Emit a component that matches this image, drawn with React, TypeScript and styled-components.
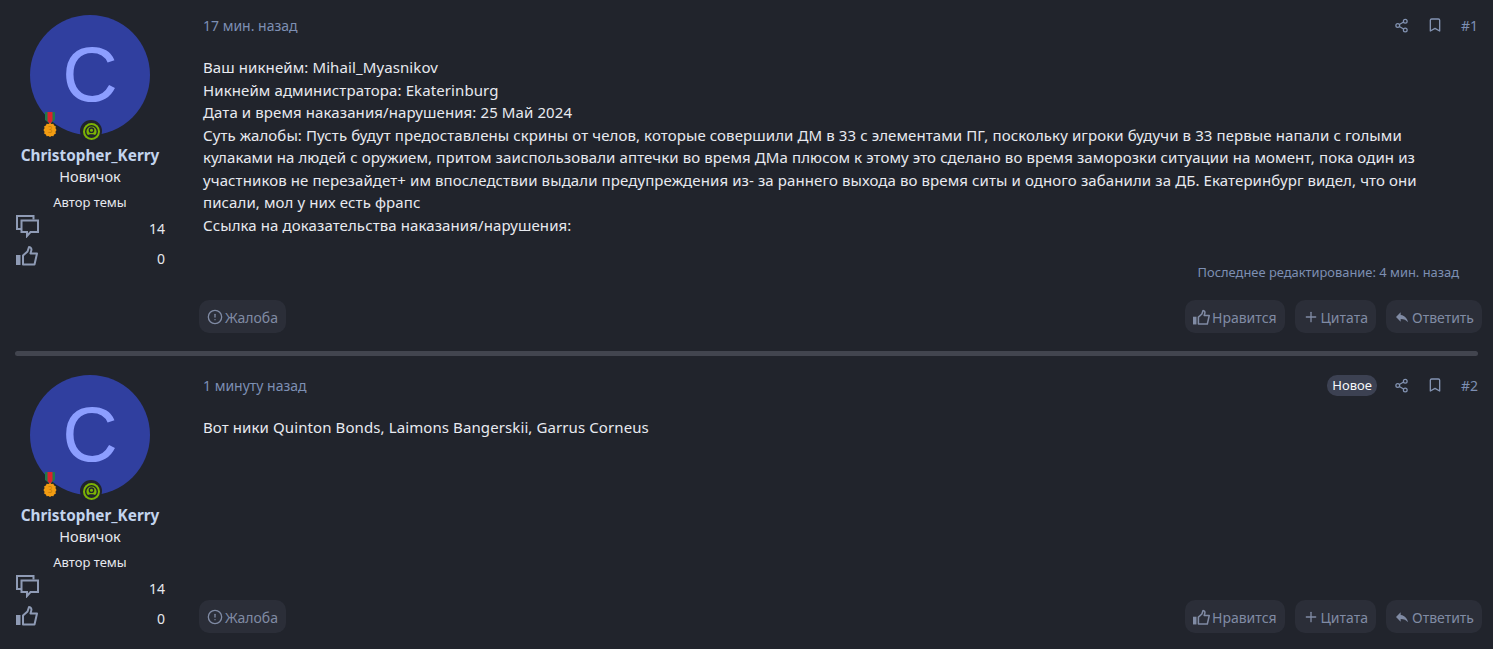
import React from "react";
import styled, {createGlobalStyle} from "styled-components";
import {Share2, Bookmark, Plus, AlertCircle} from "lucide-react";
import {MdReply} from "react-icons/md";

const GlobalStyle = createGlobalStyle`
  html, body {
    margin: 0;
    padding: 0;
    background: #21242c;
    overflow: hidden;
  }
  body {
    font-family: "Noto Sans", "Open Sans", sans-serif;
  }
`

const ThumbIcon = ({size = 22, stroke = 2}: {size?: number; stroke?: number}) => (
    <svg width={size} height={size} viewBox="0 0 22 22" fill="none" stroke="currentColor" strokeWidth={stroke} strokeLinejoin="round">
        <path d="M0 10h4.500v10H0z" fill="currentColor" stroke="none"/>
        <path d="M7 10.500 11.500 6.500 13 2c2 .2 2.800 1.800 2.300 3.500L14.500 8.500H21L18.500 19.500H7z"/>
    </svg>
)

const CommentsIcon = () => (
    <svg width="23" height="23" viewBox="0 0 23 23" fill="none" stroke="currentColor" strokeWidth="2">
        <path d="M5 14H1V1H17.500V4.500"/>
        <path d="M5.500 5.500H22V17H14.500L11 21V17H5.500Z"/>
    </svg>
)

const MedalIcon = () => (
    <svg width="16" height="26" viewBox="0 0 16 26">
        <path d="M3 0h10v8l-5 4-5-4z" fill="#1f7a4c"/>
        <path d="M5.500 0h5v9l-2.500 3-2.500-3z" fill="#d9232e"/>
        <path d="M8 11l1.500 1.100 1.900-.3.700 1.700 1.700.8-.3 1.900L14.500 18l-1 1.800.3 1.900-1.700.8-.7 1.700-1.900-.3L8 25l-1.500-1.100-1.900.3-.7-1.700-1.700-.8.3-1.900-1-1.800 1-1.800-.3-1.900 1.700-.8.700-1.700 1.900.3z" fill="#f39c12"/>
        <text x="8" y="21" textAnchor="middle" fontSize="8" fontFamily="Noto Sans" fill="#c97c08">3</text>
    </svg>
)

const StatusIcon = () => (
    <svg width="17" height="17" viewBox="0 0 17 17">
        <circle cx="8.500" cy="8.500" r="8.500" fill="#7cb305"/>
        <circle cx="8.500" cy="8.500" r="5.800" fill="none" stroke="#21242c" strokeWidth="1.400"/>
        <circle cx="8.500" cy="7.200" r="2.200" fill="none" stroke="#21242c" strokeWidth="1.300"/>
        <path d="M4.500 12.500c1.200-1.600 6.800-1.600 8 0l-1.500 1.500H6z" fill="#21242c"/>
    </svg>
)

type PostData = {
    height: number;
    time: string;
    number: string;
    isNew?: boolean;
    edited?: string;
    lines: string[];
}

const posts: PostData[] = [
    {
        height: 351,
        time: "17 мин. назад",
        number: "#1",
        edited: "Последнее редактирование: 4 мин. назад",
        lines: [
            "Ваш никнейм: Mihail_Myasnikov",
            "Никнейм администратора: Ekaterinburg",
            "Дата и время наказания/нарушения: 25 Май 2024",
            "Суть жалобы: Пусть будут предоставлены скрины от челов, которые совершили ДМ в 33 с элементами ПГ, поскольку игроки будучи в 33 первые напали с голыми кулаками на людей с оружием, притом заиспользовали аптечки во время ДМа плюсом к этому это сделано во время заморозки ситуации на момент, пока один из участников не перезайдет+ им впоследствии выдали предупреждения из- за раннего выхода во время ситы и одного забанили за ДБ. Екатеринбург видел, что они писали, мол у них есть фрапс",
            "Ссылка на доказательства наказания/нарушения:",
        ],
    },
    {
        height: 291,
        time: "1 минуту назад",
        number: "#2",
        isNew: true,
        lines: ["Вот ники Quinton Bonds, Laimons Bangerskii, Garrus Corneus"],
    },
]

const Post = ({post}: {post: PostData}) => (
    <PostRow $height={post.height}>
        <Sidebar>
            <AvatarWrap>
                <Avatar>C</Avatar>
                <Medal><MedalIcon/></Medal>
                <Status><StatusIcon/></Status>
            </AvatarWrap>
            <UserName>Christopher_Kerry</UserName>
            <UserRank>Новичок</UserRank>
            <AuthorLabel>Автор темы</AuthorLabel>
            <StatRow>
                <StatIcon><CommentsIcon/></StatIcon>
                <StatValue>14</StatValue>
            </StatRow>
            <StatRow>
                <StatIcon><ThumbIcon/></StatIcon>
                <StatValue>0</StatValue>
            </StatRow>
        </Sidebar>
        <Main>
            <PostHeader>
                <Time>{post.time}</Time>
                <HeaderActions>
                    {post.isNew && <NewBadge>Новое</NewBadge>}
                    <HeaderIcon><Share2 size={15} strokeWidth={2}/></HeaderIcon>
                    <HeaderIcon><Bookmark size={16} strokeWidth={2}/></HeaderIcon>
                    <PostNumber>{post.number}</PostNumber>
                </HeaderActions>
            </PostHeader>
            <Body>
                {post.lines.map((line) => <div key={line}>{line}</div>)}
            </Body>
            {post.edited && <Edited>{post.edited}</Edited>}
            <Footer>
                <Button><AlertCircle size={16} strokeWidth={2}/>Жалоба</Button>
                <FooterRight>
                    <Button><ThumbIcon size={17}/>Нравится</Button>
                    <Button><Plus size={16} strokeWidth={2}/>Цитата</Button>
                    <Button><MdReply size={16}/>Ответить</Button>
                </FooterRight>
            </Footer>
        </Main>
    </PostRow>
)

export default function App() {
    return (
        <Page>
            <GlobalStyle/>
            <Post post={posts[0]}/>
            <Divider/>
            <Post post={posts[1]}/>
        </Page>
    )
}

const Page = styled.div`
  display: flex;
  flex-direction: column;
  width: 1493px;
  height: 649px;
  overflow: hidden;
  background: #21242c;
`
const PostRow = styled.div<{$height: number}>`
  display: flex;
  height: ${(p) => p.$height}px;
  flex-shrink: 0;
`
const Divider = styled.div`
  height: 5px;
  margin: 0 15px 4px;
  border-radius: 3px;
  background: #42454f;
  flex-shrink: 0;
`
const Sidebar = styled.div`
  width: 180px;
  padding: 15px 15px 0 15px;
  box-sizing: border-box;
  display: flex;
  flex-direction: column;
  align-items: center;
  flex-shrink: 0;
`
const AvatarWrap = styled.div`
  position: relative;
  width: 120px;
  height: 120px;
`
const Avatar = styled.div`
  width: 120px;
  height: 120px;
  border-radius: 50%;
  background: #303f9f;
  color: #8c9eff;
  font-family: "Liberation Sans", Arial, sans-serif;
  font-size: 77px;
  line-height: 118px;
  text-align: center;
`
const Medal = styled.div`
  position: absolute;
  left: 12px;
  top: 97px;
  line-height: 0;
`
const Status = styled.div`
  position: absolute;
  left: 50px;
  top: 105px;
  width: 22px;
  height: 22px;
  border-radius: 50%;
  background: #21242c;
  display: flex;
  align-items: center;
  justify-content: center;
`
const UserName = styled.div`
  margin-top: 9px;
  font-size: 15.3px;
  line-height: 22px;
  font-weight: 700;
  white-space: nowrap;
  color: #c3d4ee;
`
const UserRank = styled.div`
  font-size: 14.5px;
  line-height: 20px;
  color: #e6e8ee;
`
const AuthorLabel = styled.div`
  margin-top: 7px;
  font-size: 13px;
  line-height: 18px;
  color: #e6e8ee;
`
const StatRow = styled.div`
  width: 100%;
  height: 30px;
  display: flex;
  align-items: center;
  justify-content: space-between;
  &:first-of-type {
    margin-top: 9px;
  }
`
const StatIcon = styled.span`
  display: flex;
  color: #8f9bb5;
  margin-left: 1px;
`
const StatValue = styled.span`
  font-size: 14px;
  color: #e6e8ee;
  margin-top: 4px;
`
const Main = styled.div`
  flex: 1;
  display: flex;
  flex-direction: column;
  padding: 15px 11px 18px 19px;
  min-width: 0;
`
const PostHeader = styled.div`
  display: flex;
  justify-content: space-between;
  align-items: center;
  height: 20px;
  margin-left: 4px;
  padding-right: 4px;
`
const Time = styled.span`
  font-size: 14px;
  color: #7d8fb3;
`
const HeaderActions = styled.div`
  display: flex;
  align-items: center;
`
const NewBadge = styled.span`
  height: 21px;
  line-height: 21px;
  padding: 0 5px;
  border-radius: 10px;
  background: #3c4152;
  color: #f6f7fa;
  font-size: 13px;
  margin-right: 17px;
`
const HeaderIcon = styled.span`
  display: flex;
  color: #8393b2;
  margin-right: 18px;
`
const PostNumber = styled.span`
  font-size: 14px;
  color: #7d8fb3;
`
const Body = styled.div`
  margin: 21px 0 0 4px;
  padding-right: 40px;
  font-size: 15px;
  line-height: 22.5px;
  letter-spacing: 0.1px;
  color: #e8eaf0;
`
const Edited = styled.div`
  margin-top: 27px;
  padding-right: 23px;
  text-align: right;
  font-size: 12.9px;
  line-height: 18px;
  color: #7d8fb3;
`
const Footer = styled.div`
  margin-top: auto;
  display: flex;
  justify-content: space-between;
`
const FooterRight = styled.div`
  display: flex;
  gap: 10px;
`
const Button = styled.button`
  height: 33px;
  padding: 1px 8px 0;
  border: none;
  border-radius: 10px;
  background: #2b2e38;
  color: #808ba4;
  font-family: inherit;
  font-size: 14px;
  display: flex;
  align-items: center;
  gap: 2px;
`
